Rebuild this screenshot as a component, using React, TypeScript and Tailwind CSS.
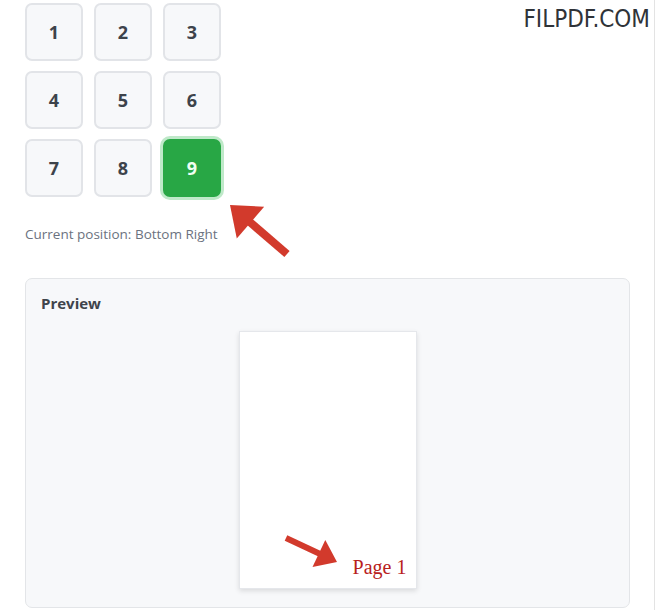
import React, { useState } from 'react';

const positions = [
  'Top Left', 'Top Center', 'Top Right',
  'Middle Left', 'Middle Center', 'Middle Right',
  'Bottom Left', 'Bottom Center', 'Bottom Right'
];

function Arrow({ x1, y1, x2, y2, width, head, spread }: { x1: number; y1: number; x2: number; y2: number; width: number; head: number; spread: number }) {
  const dx = x2 - x1;
  const dy = y2 - y1;
  const len = Math.sqrt(dx * dx + dy * dy);
  const ux = dx / len;
  const uy = dy / len;
  const bx = x2 - ux * head;
  const by = y2 - uy * head;
  const px = -uy;
  const py = ux;
  return (
    <g fill="#d23a2c" stroke="none">
      <line x1={x1} y1={y1} x2={bx + ux * 2} y2={by + uy * 2} stroke="#d23a2c" strokeWidth={width} />
      <polygon points={`${x2},${y2} ${bx + px * spread},${by + py * spread} ${bx - px * spread},${by - py * spread}`} />
    </g>
  );
}

export default function App() {
  const [selected, setSelected] = useState(8);

  return (
    <div className="relative w-[658px] h-[610px] bg-white overflow-hidden" style={{ fontFamily: "'Open Sans', 'Noto Sans', sans-serif" }}>
      <div className="w-[655px] h-full border-r border-[#e3e3e3] pl-[25px] pt-[3px]">
        <div className="grid grid-cols-[58px_58px_58px] gap-x-[11px] gap-y-[10px]">
          {positions.map((p, i) => (
            <button
              key={p}
              onClick={() => setSelected(i)}
              className={`h-[58px] rounded-[7px] text-[18px] font-bold flex items-center justify-center ${
                selected === i
                  ? 'bg-[#28a745] text-[#f0fff2] border-2 border-[#28a745] ring-[3px] ring-[#bfe9c9]'
                  : 'bg-[#f7f8fa] text-[#3d434b] border-2 border-[#e2e4e8]'
              }`}
            >
              {i + 1}
            </button>
          ))}
        </div>

        <p className="mt-[31px] text-[13.5px] text-[#6b7280] leading-none">
          Current position: {positions[selected]}
        </p>

        <div className="mt-[36px] w-[605px] h-[330px] rounded-[7px] border border-[#e3e5e8] bg-[#f7f8fa] pt-[14px] px-[15px]">
          <h3 className="text-[15px] font-bold text-[#3f444b] leading-5">Preview</h3>
          <div className="mt-[18px] flex justify-center">
            <div className="relative w-[178px] h-[258px] bg-white border border-[#e5e7eb] shadow-[0_2px_5px_rgba(0,0,0,0.12)] flex items-end justify-end pr-[9px] pb-[11px]">
              <span className="text-[20px] text-[#b8211c] leading-none" style={{ fontFamily: "'Liberation Serif', serif" }}>
                Page 1
              </span>
            </div>
          </div>
        </div>
      </div>

      <div
        className="absolute top-[7px] right-[8px] text-[24px] text-[#2f3338] leading-none"
        style={{ fontFamily: "'Liberation Sans Narrow', 'DejaVu Sans Condensed', sans-serif" }}
      >
        FILPDF.COM
      </div>

      <svg className="absolute left-0 top-0 pointer-events-none" width="658" height="610">
        <Arrow x1={287} y1={254} x2={230} y2={205} width={8} head={27} spread={21} />
        <Arrow x1={286} y1={538} x2={337} y2={562} width={6} head={20} spread={15} />
      </svg>
    </div>
  );
}
